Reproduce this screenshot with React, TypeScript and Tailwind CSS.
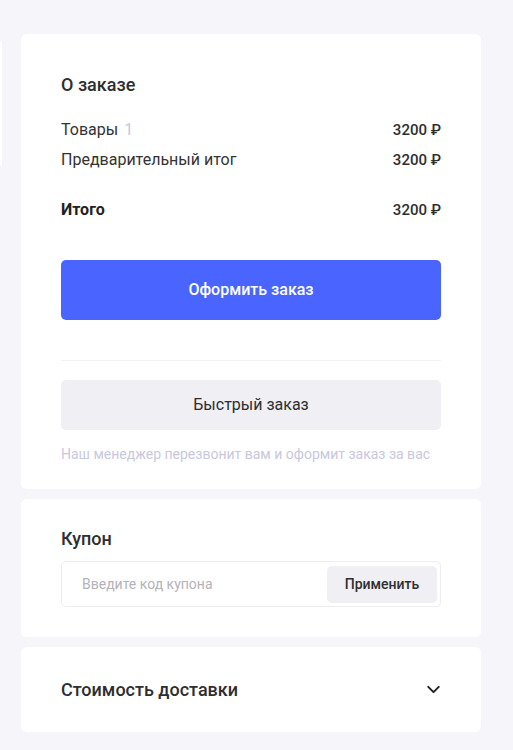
import { ChevronDown } from 'lucide-react';

function Row({ label, value, bold, extra }: { label: string; value: string; bold?: boolean; extra?: string }) {
    return (
        <div className="flex justify-between items-center h-[30px]">
            <span className={bold ? 'font-bold text-[16px] text-[#222]' : 'text-[16px] text-[#333]'}>
                {label}
                {extra && <span className="ml-[6px] text-[#c5c9dc]">{extra}</span>}
            </span>
            <span className="text-[15px] font-medium text-[#2e2e2e]">{value}</span>
        </div>
    );
}

export default function App() {
    return (
        <div
            className="min-h-[750px] w-[513px] bg-[#f6f6fa] flex items-start"
            style={{ fontFamily: 'Roboto, "Noto Sans", sans-serif' }}
        >
            <div className="w-[2px] h-[125px] mt-[41px] bg-white rounded-r-[2px]" />
            <div className="ml-[19px] mt-[34px] w-[460px] flex flex-col gap-[10px]">
                <div className="bg-white rounded-[6px] px-[40px] pt-[40px] pb-[25px]">
                    <h2 className="text-[18px] font-medium text-[#2e2e2e] leading-[22px]">О заказе</h2>
                    <div className="mt-[19px]">
                        <Row label="Товары" extra="1" value="3200 ₽" />
                        <Row label="Предварительный итог" value="3200 ₽" />
                        <div className="h-[20px]" />
                        <Row label="Итого" value="3200 ₽" bold />
                    </div>
                    <button className="mt-[35px] w-full h-[60px] rounded-[5px] bg-[#4a65ff] text-white text-[16px] font-medium">
                        Оформить заказ
                    </button>
                    <div className="mt-[40px] h-[1px] bg-[#f0f0f5]" />
                    <button className="mt-[19px] w-full h-[50px] rounded-[5px] bg-[#efeff4] text-[#2e2e2e] text-[16px]">
                        Быстрый заказ
                    </button>
                    <p className="mt-[14px] text-[14px] text-[#c9c8dc] leading-[20px]">
                        Наш менеджер перезвонит вам и оформит заказ за вас
                    </p>
                </div>

                <div className="bg-white rounded-[6px] px-[40px] pt-[29px] pb-[30px]">
                    <h2 className="text-[18px] font-medium text-[#2e2e2e] leading-[22px]">Купон</h2>
                    <div className="mt-[11px] h-[46px] border border-[#ececf1] rounded-[5px] flex items-center pl-[20px] pr-[3px]">
                        <input
                            className="flex-1 outline-none text-[14px] text-[#222] placeholder:text-[#b3b3b9] bg-transparent"
                            placeholder="Введите код купона"
                        />
                        <button className="w-[110px] h-[37px] rounded-[5px] bg-[#efeff4] text-[14px] font-medium text-[#2e2e2e]">
                            Применить
                        </button>
                    </div>
                </div>

                <div className="bg-white rounded-[6px] px-[40px] h-[85px] flex items-center justify-between">
                    <h2 className="text-[18px] font-medium text-[#2e2e2e]">Стоимость доставки</h2>
                    <ChevronDown className="w-[21px] h-[21px] text-[#222] -mr-[3px]" strokeWidth={2.3} />
                </div>
            </div>
        </div>
    );
}
